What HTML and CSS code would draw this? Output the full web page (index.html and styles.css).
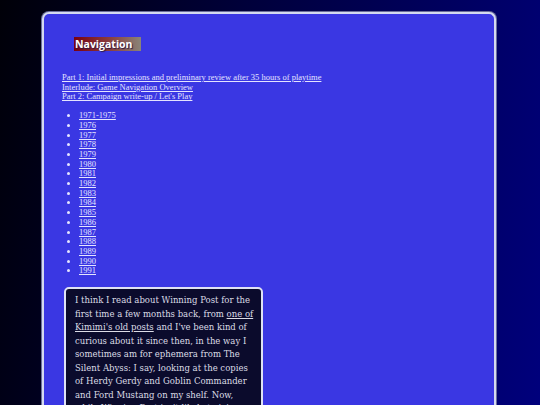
FILE: index.html
```html
<!DOCTYPE html>
<html>
<head>
<meta charset="utf-8">
<link rel="stylesheet" href="styles.css">
</head>
<body>
<div class="panel">
  <h2 class="nav-title">Navigation</h2>
  <div class="parts">
    <a href="#">Part 1: Initial impressions and preliminary review after 35 hours of playtime</a><br>
    <a href="#">Interlude: Game Navigation Overview</a><br>
    <a href="#">Part 2: Campaign write-up / Let's Play</a>
  </div>
  <ul class="years">
    <li><a href="#">1971-1975</a></li>
    <li><a href="#">1976</a></li>
    <li><a href="#">1977</a></li>
    <li><a href="#">1978</a></li>
    <li><a href="#">1979</a></li>
    <li><a href="#">1980</a></li>
    <li><a href="#">1981</a></li>
    <li><a href="#">1982</a></li>
    <li><a href="#">1983</a></li>
    <li><a href="#">1984</a></li>
    <li><a href="#">1985</a></li>
    <li><a href="#">1986</a></li>
    <li><a href="#">1987</a></li>
    <li><a href="#">1988</a></li>
    <li><a href="#">1989</a></li>
    <li><a href="#">1990</a></li>
    <li><a href="#">1991</a></li>
  </ul>
  <div class="post">
    <p>I think I read about Winning Post for the first time a few months back, from <a href="#">one of Kimimi's old posts</a> and I've been kind of curious about it since then, in the way I sometimes am for ephemera from The Silent Abyss: I say, looking at the copies of Herdy Gerdy and Goblin Commander and Ford Mustang on my shelf. Now, while Winning Post isn't likely to join them on the shelf any time soon, I did get to play it.</p>
  </div>
</div>
</body>
</html>
```
FILE: styles.css
```css
html, body {
  margin: 0;
  padding: 0;
  height: 100%;
  overflow: hidden;
}
body {
  background: linear-gradient(100deg, #000008 0%, #00003a 40%, #00007c 100%);
  font-family: "Liberation Serif", serif;
}
.panel {
  margin: 12px 0 0 42px;
  width: 454px;
  height: 420px;
  background: #3a37e3;
  border: 2px solid #d4daf0;
  border-bottom: none;
  border-radius: 7px 7px 0 0;
  box-shadow: 0 0 0 1px #6b6f9a;
  padding: 20px 0 0 18px;
  box-sizing: border-box;
}
.nav-title {
  display: inline-block;
  margin: 0 0 0 12px;
  padding: 0 8px 0 1px;
  height: 14px;
  line-height: 14px;
  font-family: "Open Sans", sans-serif;
  font-weight: bold;
  font-size: 10.5px;
  color: #fff;
  background: linear-gradient(90deg, #7a0010 0%, #8a4040 55%, #8a8478 100%);
  text-shadow: 1px 1px 1px #2a1a40;
}
.parts {
  margin-top: 21px;
  font-size: 8.5px;
  line-height: 9.7px;
}
a {
  color: #e4e4ff;
}
.years {
  margin: 9px 0 0 0;
  padding-left: 17px;
  font-size: 8.5px;
  line-height: 9.7px;
  color: #e4e4ff;
}
.post {
  margin: 11px 0 0 2px;
  width: 199px;
  background: #0b0b2c;
  border: 2px solid #dfe2f4;
  border-radius: 5px;
  padding: 5px 6px 4px 9px;
  box-sizing: border-box;
}
.post p {
  margin: 0;
  font-family: "DejaVu Serif", serif;
  font-size: 8.5px;
  line-height: 13.5px;
  color: #dcdce6;
}
.post a {
  color: #dcdce6;
}
```
